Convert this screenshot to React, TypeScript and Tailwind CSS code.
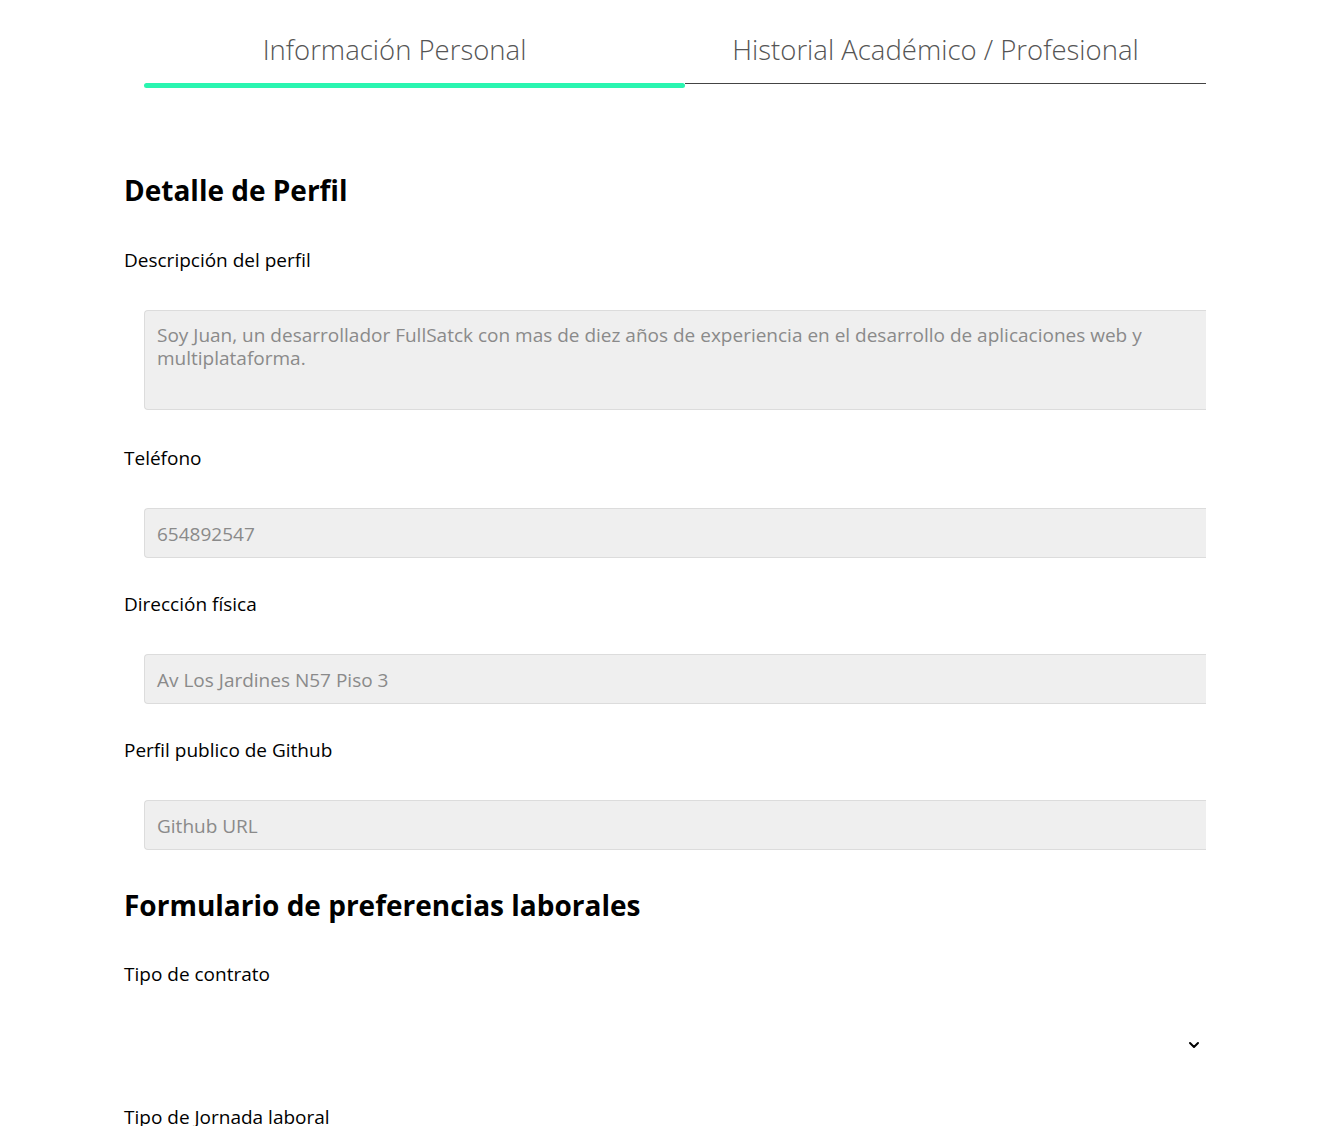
import { ChevronDown } from "lucide-react";

const fields = [
  { label: "Teléfono", value: "654892547" },
  { label: "Dirección física", value: "Av Los Jardines N57 Piso 3" },
  { label: "Perfil publico de Github", value: "Github URL" },
];

export default function App() {
  return (
    <div className="min-h-screen bg-white text-black font-['Open_Sans',sans-serif]">
      {/* Tabs */}
      <div className="ml-[144px] w-[1062px] flex">
        <div className="w-[541px] pt-[28px] flex flex-col items-center">
          <span className="text-[27.5px] font-light text-[#555] leading-[44px] -ml-[40px]">Información Personal</span>
          <div className="mt-[11px] h-[5px] w-full rounded-full bg-[#2af5b0]" />
        </div>
        <div className="flex-1 pt-[28px] flex flex-col items-center">
          <span className="text-[27.5px] font-light text-[#555] leading-[44px] -ml-[20px]">Historial Académico / Profesional</span>
          <div className="mt-[11px] h-px w-full bg-[#444]" />
        </div>
      </div>

      <div className="pl-[124px] pr-[127px] pt-[85px]">
        <h2 className="text-[28px] font-bold leading-[34px]">Detalle de Perfil</h2>

        <label className="block mt-[40px] text-[19px] leading-[26px]">Descripción del perfil</label>
        <div className="mt-[37px] ml-[20px] h-[100px] rounded-l border border-r-0 border-[#dcdcdc] bg-[#efefef] px-[12px] pt-[13px] text-[19px] leading-[23px] text-[#8a8a8a]">
          Soy Juan, un desarrollador FullSatck con mas de diez años de experiencia en el desarrollo de aplicaciones web y multiplataforma.
        </div>

        {fields.map((f, i) => (
          <div key={f.label}>
            <label className={`block text-[19px] leading-[26px] ${i === 0 ? "mt-[35px]" : "mt-[33px]"}`}>{f.label}</label>
            <div className="mt-[37px] ml-[20px] h-[50px] flex items-center rounded-l border border-r-0 border-[#dcdcdc] bg-[#efefef] px-[12px] pt-[2px] text-[19px] text-[#8a8a8a]">
              {f.value}
            </div>
          </div>
        ))}

        <h2 className="mt-[38px] text-[28px] font-bold leading-[34px]">Formulario de preferencias laborales</h2>

        <label className="block mt-[39px] text-[19px] leading-[26px]">Tipo de contrato</label>
        <div className="mt-[33px] ml-[20px] h-[50px] flex items-center justify-end pr-[4px]">
          <ChevronDown className="w-[16px] h-[16px] text-black" strokeWidth={3} />
        </div>

        <label className="block mt-[34px] text-[19px] leading-[26px]">Tipo de Jornada laboral</label>
      </div>
    </div>
  );
}
